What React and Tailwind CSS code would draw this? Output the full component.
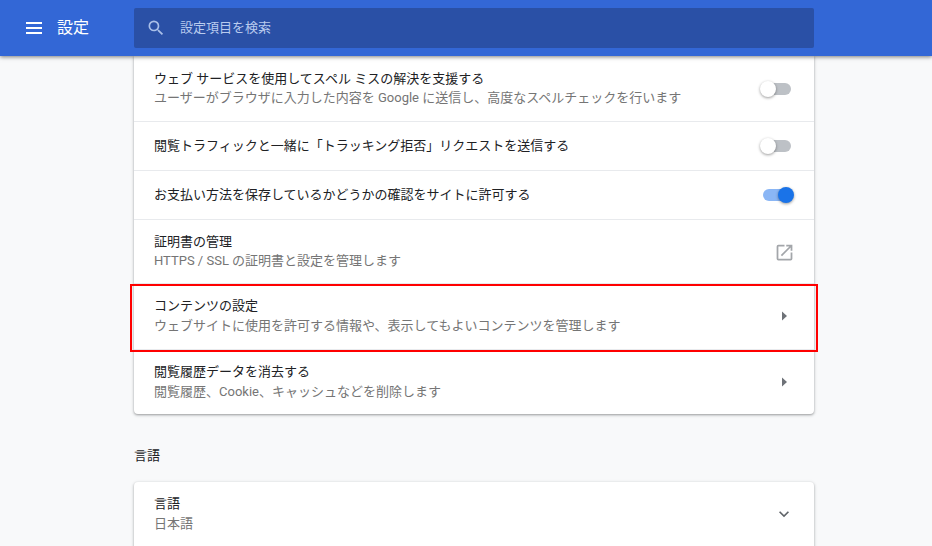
import React from "react";

const font = { fontFamily: '"Roboto", "Noto Sans CJK JP", sans-serif' };

function Toggle({ on }) {
  return (
    <div className="relative w-[34px] h-[16px]">
      <div className={`absolute left-[3px] top-[2px] w-[28px] h-[12px] rounded-full ${on ? "bg-[#8ab6f5]" : "bg-[#bdc1c6]"}`} />
      <div
        className={`absolute top-0 w-[16px] h-[16px] rounded-full ${on ? "left-[18px] bg-[#1a73e8]" : "left-0 bg-white"} shadow-[0_1px_3px_rgba(0,0,0,0.4)]`}
      />
    </div>
  );
}

function Arrow() {
  return (
    <svg width="24" height="24" viewBox="0 0 24 24" fill="#6e7278" className="mr-[-2px]">
      <path d="M10 7.5l5 4.5-5 4.5z" />
    </svg>
  );
}

function External() {
  return (
    <svg width="21" height="21" viewBox="0 0 24 24" fill="#a3a6aa" className="mr-[-1px]">
      <path d="M19 19H5V5h7V3H5a2 2 0 0 0-2 2v14a2 2 0 0 0 2 2h14a2 2 0 0 0 2-2v-7h-2v7zM14 3v2h3.59l-9.83 9.83 1.41 1.41L19 6.41V10h2V3h-7z" />
    </svg>
  );
}

function Row({ title, sub, right, h, first, tight }) {
  return (
    <div className={`flex items-center justify-between pl-[20px] pr-[20px] ${h} ${first ? "" : "border-t border-[#e8eaed]"}`}>
      <div className="min-w-0">
        <div className="text-[13px] leading-[20px] text-[#202124] whitespace-nowrap">{title}</div>
        {sub && (
          <div className={`text-[13px] text-[#757575] whitespace-nowrap ${tight ? "leading-[18px] pb-[2px]" : "leading-[20px]"}`}>{sub}</div>
        )}
      </div>
      {right}
    </div>
  );
}

export default function App() {
  return (
    <div className="relative w-[932px] h-[546px] overflow-hidden bg-[#f8f9fa]" style={font}>
      <header className="relative z-10 h-[56px] bg-[#3367d6] flex items-center shadow-[0_1px_4px_rgba(0,0,0,0.5)]">
        <div className="w-[134px] flex items-center pl-[26px] shrink-0">
          <svg width="16" height="12" viewBox="0 0 16 12" fill="white">
            <rect x="0" y="0" width="16" height="2" />
            <rect x="0" y="5" width="16" height="2" />
            <rect x="0" y="10" width="16" height="2" />
          </svg>
          <span className="ml-[15px] text-[16px] leading-[20px] text-white">設定</span>
        </div>
        <div className="w-[680px] h-[40px] rounded-[2px] bg-[#2a50a6] flex items-center pl-[12px]">
          <svg width="20" height="20" viewBox="0 0 24 24" fill="#a9bfe8">
            <path d="M15.5 14h-.79l-.28-.27A6.47 6.47 0 0 0 16 9.5 6.5 6.5 0 1 0 9.5 16c1.61 0 3.09-.59 4.23-1.57l.27.28v.79l5 4.99L20.49 19l-4.99-5zm-6 0C7.01 14 5 11.99 5 9.5S7.01 5 9.5 5 14 7.01 14 9.5 11.99 14 9.5 14z" />
          </svg>
          <span className="ml-[14px] text-[13px] leading-[20px] text-[#b9cbee]">設定項目を検索</span>
        </div>
      </header>

      <main className="w-[680px] ml-[134px]">
        <section className="bg-white rounded-b-[4px] shadow-[0_1px_2px_rgba(60,64,67,0.35),0_1px_3px_1px_rgba(60,64,67,0.15)]">
          <Row
            first
            tight
            h="h-[65px]"
            title="ウェブ サービスを使用してスペル ミスの解決を支援する"
            sub="ユーザーがブラウザに入力した内容を Google に送信し、高度なスペルチェックを行います"
            right={<Toggle />}
          />
          <Row h="h-[49px]" title="閲覧トラフィックと一緒に「トラッキング拒否」リクエストを送信する" right={<Toggle />} />
          <Row h="h-[49px]" title="お支払い方法を保存しているかどうかの確認をサイトに許可する" right={<Toggle on />} />
          <Row tight h="h-[64px] pt-[1px]" title="証明書の管理" sub="HTTPS / SSL の証明書と設定を管理します" right={<External />} />
          <Row h="h-[66px] pb-[1px]" title="コンテンツの設定" sub="ウェブサイトに使用を許可する情報や、表示してもよいコンテンツを管理します" right={<Arrow />} />
          <Row h="h-[65px]" title="閲覧履歴データを消去する" sub="閲覧履歴、Cookie、キャッシュなどを削除します" right={<Arrow />} />
        </section>

        <h2 className="mt-[32px] mb-[16px] text-[13px] leading-[20px] font-normal text-[#202124]">言語</h2>

        <section className="bg-white rounded-t-[4px] shadow-[0_1px_2px_rgba(60,64,67,0.3),0_1px_3px_1px_rgba(60,64,67,0.15)]">
          <Row
            first
            h="h-[65px] pb-[2px]"
            title="言語"
            sub="日本語"
            right={
              <svg width="20" height="20" viewBox="0 0 24 24" fill="#5f6368">
                <path d="M7.41 8.59 12 13.17l4.59-4.58L18 10l-6 6-6-6z" />
              </svg>
            }
          />
        </section>
      </main>

      <div className="absolute left-[130px] top-[284px] w-[688px] h-[68px] border-2 border-[#ff0000] pointer-events-none" />
    </div>
  );
}
